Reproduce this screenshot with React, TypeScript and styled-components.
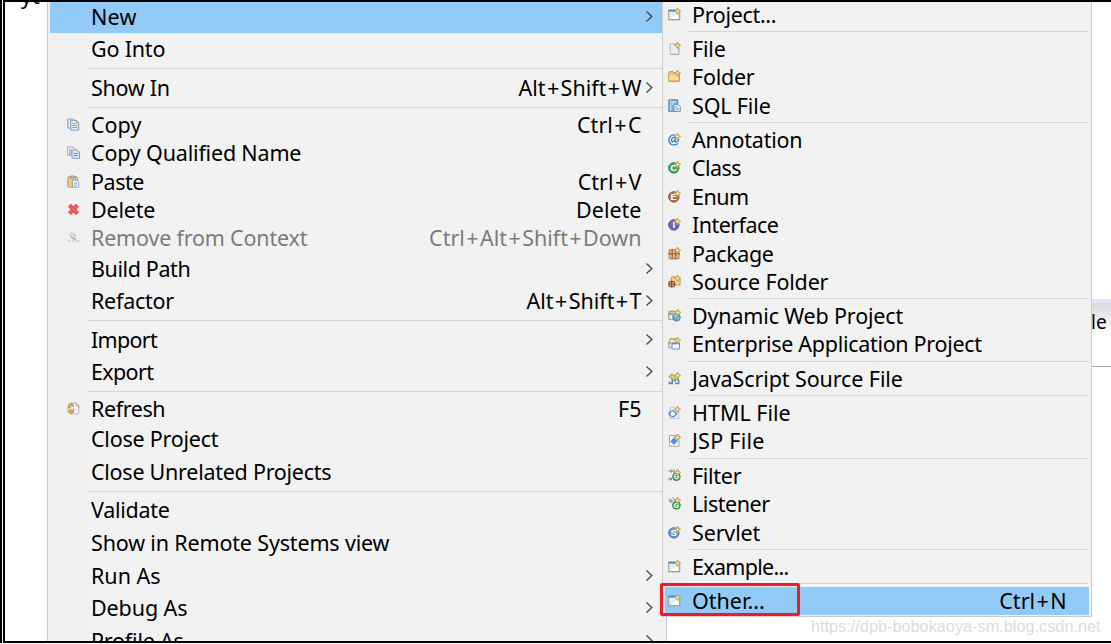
import React from "react";
import styled, { createGlobalStyle } from "styled-components";

const Global = createGlobalStyle`
  * { box-sizing: border-box; }
  body { margin: 0; background: #fff; overflow: hidden; }
`;

const Screen = styled.div`
  position: relative;
  display: flex;
  width: 1111px;
  height: 643px;
  padding-left: 3px;
  border-left: 2px solid #000;
  overflow: hidden;
  font-family: "Noto Sans", "Open Sans", sans-serif;
  font-size: 21.5px;
  color: #000;
  background: #fff;
`;

const Frame = styled.div`
  position: absolute;
  inset: 0 -4px 0 1px;
  border: 2px solid #000;
  pointer-events: none;
  z-index: 6;
`;

const Backdrop = styled.div`
  width: 42px;
  flex: none;
  padding-left: 16px;
  line-height: 30px;
  margin-top: -19px;
`;

const Menu = styled.div<{ $w: number; $gutter: number }>`
  flex: none;
  width: ${(p) => p.$w}px;
  border: solid #cbcbcb;
  border-width: 0 1px;
  padding: 2px 2px 0;
  background: linear-gradient(90deg, #f0f0f0 ${(p) => p.$gutter}px, #f2f2f2 ${(p) => p.$gutter}px);
`;

const SubMenu = styled(Menu)`
  position: relative;
  z-index: 2;
  margin-left: -5px;
  height: 617px;
  border-bottom: 1px solid #cbcbcb;
`;

const Row = styled.div<{ $h: number; $active?: boolean; $muted?: boolean; $icon: number }>`
  display: grid;
  grid-template-columns: ${(p) => p.$icon}px 1fr auto 22.5px;
  align-items: center;
  height: ${(p) => p.$h}px;
  padding-bottom: ${(p) => p.$h % 2}px;
  line-height: ${(p) => p.$h - (p.$h % 2)}px;
  white-space: nowrap;
  background: ${(p) => (p.$active ? "#91c9f7" : "transparent")};
  color: ${(p) => (p.$muted ? "#7c7c7c" : "inherit")};
`;

const IconCell = styled.span<{ $pad: number }>`
  display: flex;
  padding: 0 0 2px ${(p) => p.$pad}px;
`;

const Label = styled.span<{ $ls?: number }>`
  letter-spacing: ${(p) => p.$ls ?? 0}px;
`;

const Plus = styled.span`
  padding: 0 1.4px;
`;

const ArrowCell = styled.span`
  display: flex;
  padding: 0 0 1px 3.5px;
`;

const Separator = styled.div<{ $h: number; $off: number; $left: number }>`
  height: ${(p) => p.$h}px;
  padding: ${(p) => p.$off}px 0 0 ${(p) => p.$left}px;
  &::before {
    content: "";
    display: block;
    height: 1px;
    background: #d6d6d6;
  }
`;

const Editor = styled.div`
  flex: 1;
  padding-top: 299px;
`;
const TabStrip = styled.div`
  height: 68px;
  border-top: 4px solid #dfe4f5;
  border-bottom: 1px solid #a3a3a3;
  background: linear-gradient(#d9dae0, #fff 32px);
  font-size: 19px;
  line-height: 38px;
  text-indent: -1px;
`;

const Highlight = styled.div`
  position: absolute;
  left: 658px;
  top: 583px;
  width: 140px;
  height: 33px;
  border: 3px solid #ed1c24;
  border-radius: 2px;
  z-index: 4;
`;

const Watermark = styled.div`
  position: absolute;
  left: 809px;
  top: 616px;
  white-space: nowrap;
  font: 16.3px/20px "Liberation Sans", sans-serif;
  color: #dcdcdc;
  z-index: 3;
`;

const Svg = ({ children }: { children: React.ReactNode }) => (
  <svg width="13" height="13" viewBox="0 0 13 13" fill="none">{children}</svg>
);

const Spark = ({ x = 9.5, y = 3.3 }: { x?: number; y?: number }) => (
  <path
    d={`M${x} ${y - 3}l1 2 2 1-2 1-1 2-1-2-2-1 2-1z`}
    fill="#fff0b5"
    stroke="#c5a557"
    strokeWidth="1.1"
  />
);

const Ball = ({ fill, edge, letter, x = 5.8, y = 6.9, r = 5.2 }: { fill: string; edge: string; letter: string; x?: number; y?: number; r?: number }) => (
  <>
    <circle cx={x} cy={y} r={r} fill={fill} stroke={edge} />
    <text x={x} y={y + r * 0.62} textAnchor="middle" fontFamily="Liberation Sans" fontWeight="700" fontSize={r * 1.85} fill="#fff">{letter}</text>
  </>
);

const icons: Record<string, React.ReactNode> = {
  copy: (
    <>
      <path d="M.8 1h5l2 2v7h-7z" fill="#e2ebf4" stroke="#8aa0ac" />
      <path d="M3.8 2.3h5.4l2.5 2.6v7.2H3.8z" fill="#e4effc" stroke="#7d9ab4" />
      <path d="M9.2 2.3v2.6h2.5" stroke="#bd9b49" />
      <path d="M5.5 5.5h3M5.5 7.5h4.8M5.5 9.5h4.8" stroke="#7ea3d0" />
    </>
  ),
  copyName: (
    <>
      <path d="M.7 1h5.3l2 2v6.3H.7z" fill="#eef4ff" stroke="#b3a57c" />
      <path d="M2 4h3M2 6h3M2 8h3" stroke="#6d91cb" />
      <path d="M5 4h5l2.5 2.5v5.7H5z" fill="#dfeafc" stroke="#7e9cc0" />
      <path d="M6.5 7.5h4.5M6.5 9.5h4.5" stroke="#6d91cb" />
      <path d="M9.8 4.2l2.5 2.4" stroke="#bd9b49" />
    </>
  ),
  paste: (
    <>
      <rect x=".8" y="1.8" width="9.5" height="10.3" rx="1" fill="#eec77c" stroke="#c79b58" />
      <path d="M3 2.8h5V1.2H6.8L5.5.2 4.2 1.2H3z" fill="#bcc9dc" stroke="#7188aa" strokeWidth=".7" />
      <path d="M5.5 5.2h4.3l2 2v5H5.5z" fill="#f1f7ff" stroke="#92a5ba" strokeWidth=".9" />
      <path d="M7 8.2h3M7 10.2h3" stroke="#77a6d7" />
    </>
  ),
  remove: (
    <>
      <path d="M2.5 2.3l8 8.3M10.5 2.3L2.5 10.6" stroke="#d8474e" strokeWidth="4.2" />
      <path d="M2.6 2.4l7.8 8.1M10.4 2.4L2.6 10.5" stroke="#ee5f62" strokeWidth="2.4" />
    </>
  ),
  context: <path d="M3 3.2l2-1.5 3.5 2.5-.7 3H4.5zM5.2 3.5L7.5 5M4 5l4 3.5M.8 10h3M5.2 10h2.5M9 10h3.5M5 7l3 2 1-2" stroke="#b2b2b2" strokeWidth=".9" />,
  refresh: (
    <>
      <path d="M4 .9h5l2.8 2.8v8.2H4z" fill="#f2f7ff" stroke="#aebbd0" />
      <path d="M9 .9l2.8 2.8v2.6M9 .9v2.8h2.8" stroke="#cda956" />
      <path d="M6.3 2.2C3 1 1 3 1.3 6l2-1.6M6.5 5c.2-1.5-1-2.2-2.4-1.6M1 8.5c1 3 4 3.6 5.3 1M6.7 6.5l-.3 3-2.8-1M1.5 9l2-1.5" stroke="#c9953b" strokeWidth="1.5" />
    </>
  ),
  window: (
    <>
      <path d="M.7 2.3h11v9.4H.7z" fill="#dceefb" stroke="#a39a7c" />
      <path d="M.5 2.6h8.3" stroke="#3f83bd" strokeWidth="1.8" />
      <path d="M2 10.8l8.5-6v6z" fill="#fff" />
      <path d="M.7 11.7h11V5.5" stroke="#b99d61" />
      <Spark />
    </>
  ),
  file: (
    <>
      <path d="M2.2 1.9h8.6v10.4H2.2z" fill="#eaf0f8" stroke="#afb5bc" />
      <path d="M2.2 12.3h8.6V6" stroke="#c3b388" />
      <Spark />
    </>
  ),
  folder: (
    <>
      <path d="M.8 11V3l1.2-1.4h3L6.2 3h4.9v8z" fill="#f4c779" stroke="#c58b3a" />
      <path d="M1.3 5.5h9.8v5.3H1.3z" fill="#ffdc98" />
      <path d="M1 11.2h10.3V5" stroke="#c58b3a" />
      <Spark y={3} x={9.5} />
    </>
  ),
  sql: (
    <>
      <path d="M.8.8h9v11.5h-9z" fill="#7eb0da" stroke="#4f83b2" />
      <path d="M2.8 1v11" stroke="#d7ecfb" />
      <path d="M4 3h4.5M4 5h2" stroke="#e8f7ff" />
      <path d="M6 5.3h3.8l2.5 2.5v4.5H6z" fill="#eef6ff" stroke="#7392ac" />
      <path d="M7.5 8h2M7.5 10h3.5" stroke="#7392ac" />
    </>
  ),
  annotation: (
    <>
      <path d="M10 10.5C6 13.2 1 11.8.9 7.3.9 3.5 4 1.4 7 2M7.5 4.5C5 3.8 3.5 5.5 3.4 7.2c0 2 2.5 2 3.6-.2l.5-2.3-.6 3.7c.6 1.2 3.7.2 4-2.3" stroke="#4385c4" strokeWidth="1.4" />
      <Spark y={3.4} />
    </>
  ),
  class: <><Ball fill="#43a368" edge="#26834a" letter="C" /><Spark /></>,
  enum: <><Ball fill="#a57343" edge="#82582f" letter="E" /><Spark /></>,
  interface: <><Ball fill="#7962c0" edge="#5d4ba6" letter="I" /><Spark /></>,
  package: (
    <>
      <path d="M1.2 2.8h9.8v8.9H1.2z" fill="#e5b78b" stroke="#b07c56" />
      <path d="M0 6.8h12M4.2 1.8v10.7M7.8 1.8v10.7" stroke="#945a3b" strokeWidth="1" />
      <Spark />
    </>
  ),
  source: (
    <>
      <path d="M3.2 9V3l1-1.2h3L8.2 3H12v7H6" fill="#fbd78d" stroke="#c68d40" />
      <path d="M1 6.5h5.5v5.2H1z" fill="#dfb58b" stroke="#805235" />
      <path d="M0 9.1h7.5M3.7 5.5v7" stroke="#71482f" />
      <Spark />
    </>
  ),
  web: (
    <>
      <path d="M1.5 5V2.5h7M.7 10.5v-6h5" stroke="#c99e43" strokeWidth="1.3" />
      <path d="M1 5.5h5v5H1z" fill="#e7f2ff" stroke="#8ca8c6" />
      <circle cx="8.5" cy="8.3" r="3.8" fill="#69a5db" stroke="#5380a8" />
      <path d="M6 6l2-.8 1.8 1L8.7 8 7 8.6zM9.5 9l2-1-.8 3z" fill="#b0d88d" />
      <Spark x={9.8} />
    </>
  ),
  enterprise: (
    <>
      <path d="M2.2 3.5V2h6M.8 9V5h2" stroke="#c99e43" strokeWidth="1.4" />
      <path d="M.8 6.2h7v4.5h-7z" fill="#d9eaff" stroke="#8fa7bd" />
      <path d="M4 6h7.5v6H4z" fill="#f4faff" stroke="#6c91b9" />
      <path d="M4 6.6h7.5" stroke="#5f91c3" strokeWidth="1.5" />
      <Spark />
    </>
  ),
  javascript: (
    <>
      <path d="M.8 5l3-3.2L6 4l2-1 3 4-1.5 1.5L7 6.8 4.5 9 3.3 6z" fill="#d9cb68" stroke="#9c9450" strokeWidth=".9" />
      <path d="M4.3 7v4.5H1.5V9.5M7 11.5h3.6V8M7 7.5v2.5" stroke="#5585b1" strokeWidth="1.5" />
      <Spark />
    </>
  ),
  html: (
    <>
      <path d="M2 1.8h8.8v10.5H2z" fill="#f0f6ff" stroke="#bec5ce" />
      <path d="M3.2 5.2L.9 7.8l2.3 2.6M6.3 5.2l2.3 2.6-2.3 2.6M3.5 4.8h2.6M3.5 10.6h2.6" stroke="#4a87c3" strokeWidth="1.3" />
      <Spark />
    </>
  ),
  jsp: (
    <>
      <path d="M1.5 1.5H11v10.8H1.5z" fill="#f0f6ff" stroke="#a8a99e" />
      <path d="M6 3.9l3.3 3.3L6 10.5 2.7 7.2z" fill="#508edb" stroke="#719fd8" />
      <Spark />
    </>
  ),
  filter: (
    <>
      <path d="M.4 2h4M3 .5L4.7 2 3 3.5M6.2.5v3M.4 10h3M2.3 8.5L4 10l-1.7 1.5" stroke="#64788d" strokeWidth="1" />
      <Ball fill="#57a66a" edge="#38844b" letter="G" x={8.4} y={7.8} r={3.8} />
      <Spark />
    </>
  ),
  listener: (
    <>
      <path d="M1 3.7l2.3 1.8M2.7 2l2.2 2.2M4.7.6l1.6 2M.5 1.8l3.7 3.5" stroke="#5b82a7" />
      <Ball fill="#57a66a" edge="#38844b" letter="G" x={8.4} y={8.3} r={3.9} />
      <Spark />
    </>
  ),
  servlet: <><Ball fill="#6798c9" edge="#447baa" letter="S" /><Spark /></>,
};

type Entry =
  | { h: number; label: string; icon?: string; keys?: string; arrow?: boolean; active?: boolean; muted?: boolean; ls?: number }
  | { h: number; off: number };

const mainMenu: Entry[] = [
  { h: 31, label: "New", arrow: true, active: true, ls: 0.2 },
  { h: 33, label: "Go Into", ls: -0.2 },
  { h: 6, off: 2 },
  { h: 32, label: "Show In", keys: "Alt+Shift+W", arrow: true, ls: -0.3 },
  { h: 7, off: 3 },
  { h: 28, label: "Copy", keys: "Ctrl+C", icon: "copy" },
  { h: 29, label: "Copy Qualified Name", icon: "copyName", ls: -0.18 },
  { h: 28, label: "Paste", keys: "Ctrl+V", icon: "paste", ls: -0.45 },
  { h: 28, label: "Delete", keys: "Delete", icon: "remove", ls: -0.2 },
  { h: 29, label: "Remove from Context", keys: "Ctrl+Alt+Shift+Down", icon: "context", muted: true, ls: -0.19 },
  { h: 32, label: "Build Path", arrow: true, ls: -0.4 },
  { h: 32, label: "Refactor", keys: "Alt+Shift+T", arrow: true, ls: -0.25 },
  { h: 7, off: 3 },
  { h: 32, label: "Import", arrow: true, ls: -0.7 },
  { h: 33, label: "Export", arrow: true, ls: -0.65 },
  { h: 6, off: 2 },
  { h: 28, label: "Refresh", keys: "F5", icon: "refresh", ls: -0.4 },
  { h: 33, label: "Close Project", ls: -0.23 },
  { h: 32, label: "Close Unrelated Projects", ls: -0.26 },
  { h: 6, off: 3 },
  { h: 33, label: "Validate", ls: -0.28 },
  { h: 33, label: "Show in Remote Systems view", ls: -0.16 },
  { h: 32, label: "Run As", arrow: true },
  { h: 33, label: "Debug As", arrow: true, ls: -0.1 },
  { h: 32, label: "Profile As", arrow: true, ls: -0.2 },
];

const newMenu: Entry[] = [
  { h: 27, label: "Project...", icon: "window", ls: -0.33 },
  { h: 6, off: 2 },
  { h: 28, label: "File", icon: "file", ls: -0.2 },
  { h: 29, label: "Folder", icon: "folder", ls: -0.25 },
  { h: 28, label: "SQL File", icon: "sql", ls: -0.15 },
  { h: 6, off: 2 },
  { h: 28, label: "Annotation", icon: "annotation", ls: -0.25 },
  { h: 29, label: "Class", icon: "class", ls: -0.55 },
  { h: 28, label: "Enum", icon: "enum", ls: -0.5 },
  { h: 29, label: "Interface", icon: "interface", ls: -0.55 },
  { h: 28, label: "Package", icon: "package", ls: -0.4 },
  { h: 28, label: "Source Folder", icon: "source", ls: -0.17 },
  { h: 6, off: 2 },
  { h: 28, label: "Dynamic Web Project", icon: "web", ls: -0.17 },
  { h: 29, label: "Enterprise Application Project", icon: "enterprise", ls: -0.3 },
  { h: 6, off: 2 },
  { h: 28, label: "JavaScript Source File", icon: "javascript", ls: -0.1 },
  { h: 6, off: 2 },
  { h: 28, label: "HTML File", icon: "html" },
  { h: 29, label: "JSP File", icon: "jsp", ls: 0.25 },
  { h: 6, off: 2 },
  { h: 28, label: "Filter", icon: "filter", ls: -0.3 },
  { h: 29, label: "Listener", icon: "listener", ls: -0.45 },
  { h: 28, label: "Servlet", icon: "servlet", ls: -0.15 },
  { h: 6, off: 2 },
  { h: 28, label: "Example...", icon: "window", ls: -0.7 },
  { h: 6, off: 2 },
  { h: 28, label: "Other...", icon: "window", keys: "Ctrl+N", active: true },
];

const Shortcut = ({ keys = "" }: { keys?: string }) => (
  <span>
    {keys.split("+").map((k, i) => (
      <React.Fragment key={i}>
        {i > 0 && <Plus>+</Plus>}
        {k}
      </React.Fragment>
    ))}
  </span>
);

const Items = ({ entries, iconWidth, iconPad, lineLeft }: { entries: Entry[]; iconWidth: number; iconPad: number; lineLeft: number }) => (
  <>
    {entries.map((e, i) =>
      "off" in e ? (
        <Separator key={i} $h={e.h} $off={e.off} $left={lineLeft} />
      ) : (
        <Row key={i} $h={e.h} $active={e.active} $muted={e.muted} $icon={iconWidth}>
          <IconCell $pad={iconPad}>{e.icon && <Svg>{icons[e.icon]}</Svg>}</IconCell>
          <Label $ls={e.ls}>{e.label}</Label>
          <Shortcut keys={e.keys} />
          <ArrowCell>
            {e.arrow && (
              <svg width="9" height="13" viewBox="0 0 9 13" fill="none">
                <path d="M1.5 1.5l5.3 5-5.3 5" stroke="#444" strokeWidth="1.3" />
              </svg>
            )}
          </ArrowCell>
        </Row>
      ),
    )}
  </>
);

export default function App() {
  return (
    <>
      <Global />
      <Screen>
        <Backdrop>yt</Backdrop>
        <Menu $w={620} $gutter={39}>
          <Items entries={mainMenu} iconWidth={41} iconPad={17} lineLeft={37} />
        </Menu>
        <SubMenu $w={430} $gutter={25}>
          <Items entries={newMenu} iconWidth={27} iconPad={3} lineLeft={24} />
        </SubMenu>
        <Editor>
          <TabStrip>le</TabStrip>
        </Editor>
        <Highlight />
        <Watermark>https://dpb-bobokaoya-sm.blog.csdn.net</Watermark>
        <Frame />
      </Screen>
    </>
  );
}
